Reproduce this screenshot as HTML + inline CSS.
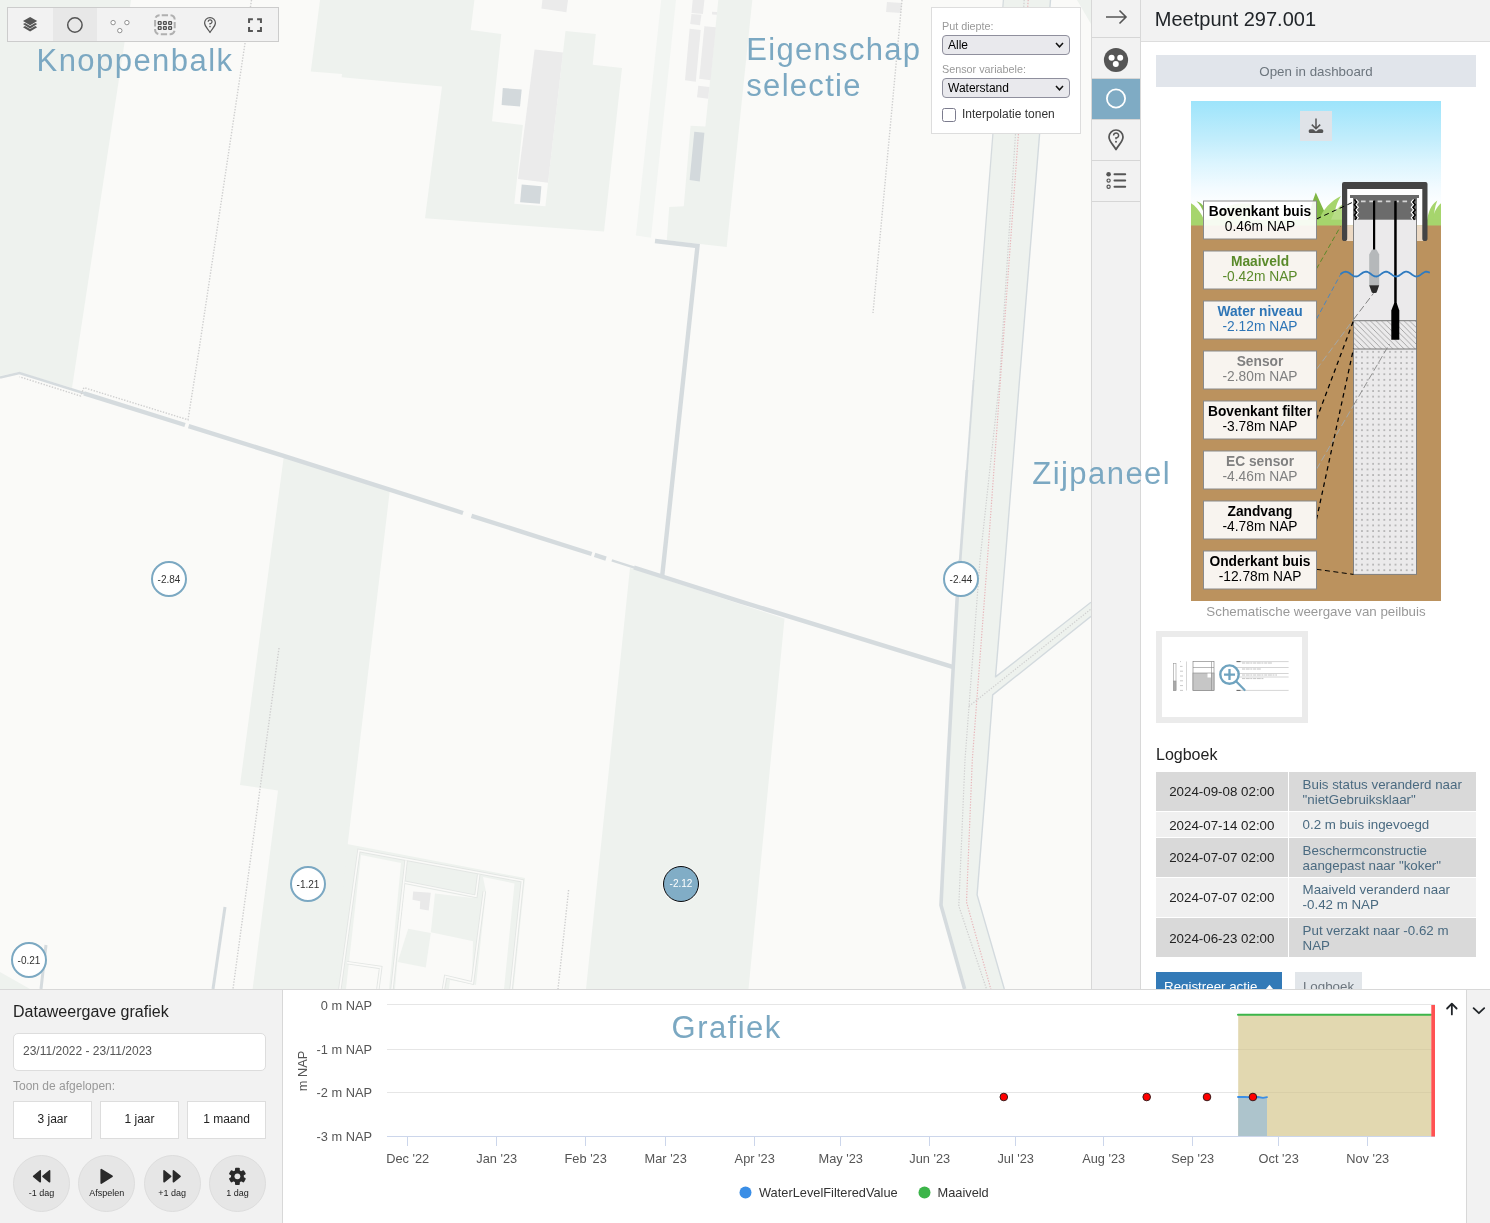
<!DOCTYPE html>
<html lang="nl">
<head>
<meta charset="utf-8">
<title>Meetpunt 297.001</title>
<style>
*{box-sizing:border-box;margin:0;padding:0}
html,body{width:1490px;height:1223px;overflow:hidden;background:#fff;will-change:transform;font-family:"Liberation Sans",sans-serif;color:#222}
.abs{position:absolute}
#map{position:absolute;left:0;top:0;width:1091px;height:989px;overflow:hidden;background:#fafaf8}
#mapsvg{position:absolute;left:0;top:0}
.anno{position:absolute;color:#7ba8c2;font-size:31px;line-height:36px;letter-spacing:1.45px;white-space:nowrap}
.mk{position:absolute;width:36px;height:36px;border-radius:50%;border:2px solid #7ba8c2;background:#fff;font-size:10px;line-height:34px;text-align:center;color:#333}
.mk.selm{background:#81adc6;border:1.8px solid #0a0a0a;color:#fff;line-height:34px;box-shadow:0 0 0 0.8px rgba(255,255,255,0.75)}
/* toolbar */
#toolbar{position:absolute;left:7px;top:7px;width:272px;height:35px;border:1px solid #ccc;background:#f2f2f2;display:flex}
#toolbar .tb{width:45px;height:33px;position:relative}
#toolbar .tb.sel{background:#e8e8e8;width:44px;margin-right:1px}
#toolbar svg{position:absolute;left:0;top:0}
/* selection panel */
#selpanel{position:absolute;left:931px;top:7px;width:150px;height:127px;background:#fff;border:1px solid #ddd}
#selpanel .lbl{position:absolute;left:10px;font-size:10.8px;color:#999;line-height:13px}
#selpanel .sel{position:absolute;left:10px;width:128px;height:20px;border:1px solid #8f8f9d;border-radius:4px;background:#e9e9ed;font-size:12px;line-height:18px;padding-left:5px;color:#000}
#selpanel .cb{position:absolute;left:10px;top:100.2px;width:13.5px;height:13.5px;border:1.8px solid #7c7c8e;border-radius:2.5px;background:#fff}
/* icon column */
#iconcol{position:absolute;left:1091px;top:0;width:50px;height:989px;background:#f2f2f2;border-left:1px solid #d8d8d8;border-right:1px solid #d8d8d8}
#iconcol .ib{position:absolute;left:0;width:48px;height:41px;border-bottom:1px solid #d6d6d6}
#iconcol .ib.sel{background:#7fabc4}
/* side panel */
#side{position:absolute;left:1141px;top:0;width:349px;height:989px;background:#fff;overflow:hidden}
#side .hdr{position:absolute;left:0;top:0;width:349px;height:42px;background:#f2f2f2;border-bottom:1px solid #ddd}
#side .hdr span{position:absolute;left:13.8px;top:7.6px;font-size:20px;line-height:22px;color:#212529}
#dashbtn{position:absolute;left:15px;top:55px;width:320px;height:32px;background:#e1e5eb;color:#6c757d;font-size:13.33px;line-height:33.6px;text-align:center}
.lr{position:absolute;left:15px;width:320px}
.lr .c1{background:var(--bg);overflow:hidden;position:absolute;left:0;top:0;width:131.6px;height:100%;text-align:center;font-size:13.33px;color:#222}
.lr .c2{background:var(--bg);position:absolute;left:133.4px;top:0;width:186.6px;height:100%;font-size:13.33px;line-height:14.9px;color:#4a6a80;display:flex;align-items:center;padding-left:13.2px;padding-top:var(--pt)}
.pb{position:absolute;top:111px;width:79px;height:37.5px;background:#fff;border:1px solid #ddd;font-size:12px;line-height:35px;text-align:center;color:#222}
.rb{position:absolute;top:165px;width:57px;height:57px;border-radius:50%;background:#e6e6e6;border:1px solid #ddd}
.rb svg{position:absolute;left:-1px;top:-1px}
.rb span{position:absolute;left:-1px;top:32px;width:57px;text-align:center;font-size:9px;line-height:11px;color:#222}
.yl{position:absolute;left:292px;width:80px;text-align:right;font-size:12.8px;line-height:14px;color:#555}
.xl{position:absolute;top:162.2px;width:80px;margin-left:-40px;text-align:center;font-size:12.8px;line-height:14px;color:#555}
/* bottom */
#bottom{position:absolute;left:0;top:989px;width:1490px;height:234px;background:#fff;border-top:1px solid #d8d8d8}
#bleft{position:absolute;left:0;top:0;width:283px;height:233px;background:#f2f2f2;border-right:1px solid #d8d8d8}
#bright{position:absolute;left:1466px;top:0;width:24px;height:233px;background:#f2f2f2;border-left:1px solid #d8d8d8}
</style>
</head>
<body>
<div id="map">
<svg id="mapsvg" width="1091" height="989" viewBox="0 0 1091 989">
<g fill="#eef2ee" stroke="none">
<polygon points="0,0 131,0 72,388 19,372 0,376"/>
<polygon points="320,0 474.4,0 470.7,30 501.3,34 492,121.3 522.9,125 514.3,203.8 545.4,206.2 548,182.8 563,52.5 565.5,30.9 595.8,34 592.7,64.8 622,67.9 604,231.6 425,218.3 442,86.4 341.7,77.2 342,74 310.8,71.6"/>
<polygon points="718.3,0 752.3,0 726.7,247 666.8,240.2 669.2,206.9 683.8,206.2 690.6,125.7 705.4,126.6"/>
<polygon points="284,455 390,489 347.5,846 341,989 252.6,989 278,790.5 240,785"/>
<polygon points="630,567.7 784.5,618.8 748.5,989 586,989"/>
<polygon points="0,972 30,989 0,989"/>
<polygon points="1077,0 1091,0 1091,24"/>
</g>
<polygon fill="#f2f5f2" points="661.2,0 676,0 651,237.7 635.9,235.6"/>
<!-- buildings -->
<g fill="#ebebeb">
<polygon points="534.6,49.4 563,52.5 548,182.8 518,179"/>
<polygon points="542.4,0 568,0 566.4,12.3 541.4,8.6"/>
<polygon points="692.7,0 704.4,0 702.9,13.9 691.5,13"/>
<polygon points="691.5,13.9 701.4,14.8 700,25.3 690.2,24"/>
<polygon points="689.6,28.7 700.7,30 695.8,81.8 685,80.3"/>
<polygon points="704.4,26.2 715.9,27.2 710.6,80.3 699.2,78.7"/>
<polygon points="698.3,85.8 709.4,87 708.2,98.8 697,97.3"/>
<polygon points="712,11.7 717,12 717,14.8 712,14.5"/>
<polygon points="887,2 902,3 901,13 886,12"/>
</g>
<g fill="#d3d9dc">
<polygon points="502.8,88 521.7,89.5 520,106.5 501.6,105"/>
<polygon points="521.7,184.6 541.4,186.2 539.9,203.8 520.1,202.2"/>
<polygon points="694.3,131.8 704.4,132.8 699.8,181.5 689.6,180"/>
</g>
<!-- ditches -->
<g fill="none" stroke="#d5dbde" stroke-width="4.4" stroke-linejoin="miter">
<polyline stroke-width="2.6" points="0,377.5 19.5,373 85,393.6"/>
<polyline points="84,393.3 185,425"/>
<polyline points="188.6,426.1 283.6,455.9 463,513"/>
<polyline points="471.5,515.8 540,537.6 591.7,554"/>
<polyline points="594.6,554.9 606,558.6"/>
<polyline stroke-width="2.4" points="611.8,560.4 636,568.1"/>
<polyline points="634,567.5 740,601.3 952.5,666.8"/>
<polyline points="655,241 697.5,246 662.3,575"/>
<line x1="225" y1="907" x2="213" y2="989" stroke-width="3"/>
<line x1="46" y1="945" x2="41" y2="989" stroke-width="3"/>
</g>
<!-- dotted lines -->
<g fill="none" stroke="#cfcfcf" stroke-width="1.4" stroke-dasharray="1.4,1.5">
<polyline points="251.5,0 199,350 188,419.8 83.9,387.6 80.5,396 19.5,376.8"/>
<line x1="902" y1="0" x2="873" y2="313"/>
<line x1="279" y1="648" x2="233" y2="989"/>
<line x1="568.6" y1="890" x2="558" y2="989"/>
</g>
<!-- road strip on the right -->
<polygon fill="#eef2ee" points="1003.4,0 992.9,134 973.6,380 966.9,470 960.2,560 957.3,596 953.3,666 948.1,760 941,905.2 964.6,989 1004.3,989 977.1,894.9 987.8,760 992.7,694.9 1091,616.4 1091,602.2 995.5,676.9 1005.2,560 1019.5,380 1039.6,134 1050.5,0"/>
<g fill="none" stroke="#d5dbde" stroke-linejoin="round">
<polyline stroke-width="1.3" points="1003.4,0 992.9,134 973.6,380"/>
<polyline stroke-width="1.9" points="973.6,380 966.9,470"/>
<polyline stroke-width="2.7" points="966.9,470 960.2,560"/>
<polyline stroke-width="3.6" points="960.2,560 957.3,596 953.3,666 948.1,760 941,905.2 964.6,989"/>
<polyline stroke="#d3dade" stroke-width="1.4" points="1050.5,0 1039.6,134 1019.5,380 1005.2,560 995.5,676.9 1091,602.2"/>
<polyline stroke="#d3dade" stroke-width="1.4" points="1091,616.4 992.7,694.9 987.8,760 977.1,894.9 1004.3,989"/>
<polyline stroke="#cfcfcf" stroke-width="1.2" stroke-dasharray="1.3,1.5" points="1024.2,0 1015.5,134 999.6,380 980,560 965,760 958.8,906 986.5,989"/>
<polyline stroke="#e8b6ba" stroke-width="1.2" stroke-dasharray="1.3,1.5" points="1028.2,0 1018.4,134 1000.4,380 987.4,560 972.3,760 966.5,902 990.8,989"/>
<polyline stroke="#cfcfcf" stroke-width="1.2" stroke-dasharray="1.3,1.5" points="969,706.3 1091,609"/>
</g>
<!-- bottom building complex -->
<polygon fill="#eef2ee" points="347,844 525,878 513.5,989 336,989"/>
<g fill="#fafaf8" stroke="none">
<polygon points="361,855 401,863 389,989 346,989"/>
<polygon points="404,884 474,898 472,982 445,976 443.5,989 395,989"/>
<polygon points="483,877 514.5,883.5 504,989 449,989 450,980 476,985 486,892"/>
</g>
<g fill="#eef2ee" stroke="none">
<polygon points="435,893.5 477.5,898.5 474.5,941.4 430.8,932.3"/>
<polygon points="408.2,928.7 430.8,933 425.8,967.5 397.7,961.9"/>
</g>
<g fill="none" stroke="#e3e6e4" stroke-width="3.4" stroke-linejoin="miter">
<polyline points="339.9,989 358.9,850.5 522.4,880.8 511.1,989"/>
<polyline points="406.1,860.4 392,989"/>
<polyline points="404.7,882.2 475.9,896.3 478.7,874.5"/>
<polyline points="484.3,891.4 472.4,983 445.6,976.6 443.5,989"/>
<polyline points="346.9,962.6 380.7,967.5 377.9,989"/>
</g>
<g fill="none" stroke="#fafaf8" stroke-width="1.6" stroke-linejoin="miter">
<polyline points="339.9,989 358.9,850.5 522.4,880.8 511.1,989"/>
<polyline points="406.1,860.4 392,989"/>
<polyline points="404.7,882.2 475.9,896.3 478.7,874.5"/>
<polyline points="484.3,891.4 472.4,983 445.6,976.6 443.5,989"/>
<polyline points="346.9,962.6 380.7,967.5 377.9,989"/>
</g>
<polygon fill="#e9e9e9" points="413.2,891.4 430.8,892.8 428.7,910.4 419.8,909 420.2,901.2 412.5,899.8"/>
</svg>
<div id="toolbar">
<div class="tb"><svg width="45" height="33" viewBox="0 0 45 33"><g fill="#555"><path d="M22.1 9 L29.2 13.1 L22.1 17.2 L15 13.1 Z"/><path d="M15 16.1 L17 14.95 L22.1 17.95 L27.2 14.95 L29.2 16.1 L22.1 20.4 Z"/><path d="M15 19.2 L17 18.05 L22.1 21.05 L27.2 18.05 L29.2 19.2 L22.1 23.5 Z"/></g></svg></div>
<div class="tb sel"><svg width="45" height="33" viewBox="0 0 45 33"><circle cx="21.9" cy="17" r="7.2" fill="none" stroke="#555" stroke-width="1.5"/></svg></div>
<div class="tb"><svg width="45" height="33" viewBox="0 0 45 33"><g fill="#fff" stroke="#777" stroke-width="0.8"><circle cx="15.1" cy="14.6" r="2.2"/><circle cx="28.9" cy="14.6" r="2.2"/><circle cx="21.8" cy="22.6" r="2.2"/></g></svg></div>
<div class="tb"><svg width="45" height="33" viewBox="0 0 45 33"><rect x="12.1" y="7.2" width="19.6" height="19" rx="4.5" fill="none" stroke="#b0b0b0" stroke-width="2" stroke-dasharray="6.3,2.54" stroke-dashoffset="-2.12"/><g fill="none" stroke="#505050" stroke-width="1.3"><rect x="15.3" y="13.6" width="2.8" height="2.8" rx="0.6"/><rect x="20.5" y="13.6" width="2.8" height="2.8" rx="0.6"/><rect x="25.7" y="13.6" width="2.8" height="2.8" rx="0.6"/><rect x="15.3" y="18.6" width="2.8" height="2.8" rx="0.6"/><rect x="20.5" y="18.6" width="2.8" height="2.8" rx="0.6"/><rect x="25.7" y="18.6" width="2.8" height="2.8" rx="0.6"/></g></svg></div>
<div class="tb"><svg width="45" height="33" viewBox="0 0 45 33"><path d="M22 24.5 C20 21 16.6 18.5 16.6 15 A5.4 5.4 0 0 1 27.4 15 C27.4 18.5 24 21 22 24.5 Z" fill="none" stroke="#555" stroke-width="1.2" stroke-linejoin="round"/><path d="M20.2 13.7 A1.9 1.9 0 1 1 22 15.6 L22 16.6" fill="none" stroke="#555" stroke-width="1.2"/><circle cx="22" cy="18.6" r="0.8" fill="#555"/></svg></div>
<div class="tb"><svg width="45" height="33" viewBox="0 0 45 33"><g fill="none" stroke="#555" stroke-width="2"><path d="M16.05 15 V11.15 H19.9"/><path d="M24.1 11.15 H27.95 V15"/><path d="M27.95 19.1 V22.95 H24.1"/><path d="M19.9 22.95 H16.05 V19.1"/></g></svg></div>
</div>
<div class="anno" style="left:36.5px;top:43px">Knoppenbalk</div>
<div class="anno" style="left:746.3px;top:32px;letter-spacing:1.3px">Eigenschap<br>selectie</div>
<div id="selpanel">
<div class="lbl" style="top:12px">Put diepte:</div>
<div class="sel" style="top:27px">Alle<svg class="abs" style="right:5px;top:5px" width="9" height="8" viewBox="0 0 9 8"><path d="M1 2 L4.5 5.8 L8 2" fill="none" stroke="#111" stroke-width="1.5"/></svg></div>
<div class="lbl" style="top:55px">Sensor variabele:</div>
<div class="sel" style="top:70px">Waterstand<svg class="abs" style="right:5px;top:5px" width="9" height="8" viewBox="0 0 9 8"><path d="M1 2 L4.5 5.8 L8 2" fill="none" stroke="#111" stroke-width="1.5"/></svg></div>
<div class="cb"></div>
<div class="abs" style="left:30px;top:99px;font-size:12px;line-height:14px;color:#333">Interpolatie tonen</div>
</div>
<div class="mk" style="left:151px;top:561px">-2.84</div>
<div class="mk" style="left:943px;top:561px">-2.44</div>
<div class="mk" style="left:290px;top:866px">-1.21</div>
<div class="mk selm" style="left:663px;top:866px">-2.12</div>
<div class="mk" style="left:11px;top:942px">-0.21</div>
</div>
<div id="iconcol">
<div class="ib" style="top:-3px"><svg class="abs" style="left:0;top:3px" width="48" height="38" viewBox="0 0 48 38"><path d="M14 17 H34 M27.5 10.5 L34 17 L27.5 23.5" fill="none" stroke="#555" stroke-width="1.6"/></svg></div>
<div class="ib" style="top:38px"><svg class="abs" style="left:0;top:0" width="48" height="40" viewBox="0 0 48 40"><circle cx="24" cy="22" r="12.1" fill="#555"/><circle cx="19.6" cy="19.8" r="3" fill="#fff"/><circle cx="28.2" cy="19.8" r="3" fill="#fff"/><circle cx="23.8" cy="26.1" r="3" fill="#fff"/></svg></div>
<div class="ib sel" style="top:79px"><svg class="abs" style="left:0;top:0" width="48" height="40" viewBox="0 0 48 40"><circle cx="24" cy="19.5" r="9.1" fill="none" stroke="#fff" stroke-width="1.8"/></svg></div>
<div class="ib" style="top:120px"><svg class="abs" style="left:0;top:0" width="48" height="40" viewBox="0 0 48 40"><path d="M24 29.5 C21.5 25 17 21.5 17 17 A7 7 0 0 1 31 17 C31 21.5 26.5 25 24 29.5 Z" fill="none" stroke="#555" stroke-width="1.7" stroke-linejoin="round"/><path d="M21.6 15.4 A2.5 2.5 0 1 1 24 17.9 L24 19.2" fill="none" stroke="#555" stroke-width="1.5"/><circle cx="24" cy="21.8" r="1" fill="#555"/></svg></div>
<div class="ib" style="top:161px"><svg class="abs" style="left:0;top:0" width="48" height="40" viewBox="0 0 48 40"><g stroke="#555" stroke-width="2" fill="none" stroke-linecap="round"><path d="M22.5 13.2 H33.2 M22.5 19.6 H33.2 M22.5 25.7 H33.2"/></g><circle cx="16.6" cy="13.2" r="2.3" fill="#555"/><circle cx="16.6" cy="19.6" r="1.6" fill="none" stroke="#555" stroke-width="1.2"/><circle cx="16.6" cy="25.7" r="1.6" fill="none" stroke="#555" stroke-width="1.2"/></svg></div>
</div>
<div id="side">
<div class="hdr"><span>Meetpunt 297.001</span></div>
<div id="dashbtn">Open in dashboard</div>
<!--ILLSTART-->
<svg class="abs" style="left:50px;top:101px" width="250" height="500" viewBox="0 0 250 500" font-family="Liberation Sans, sans-serif">
<defs>
<linearGradient id="sky" x1="0" y1="0" x2="0" y2="1"><stop offset="0" stop-color="#9de4fb"/><stop offset="0.3" stop-color="#c1edfc"/><stop offset="0.5" stop-color="#dcf5fe"/><stop offset="0.7" stop-color="#f3fbff"/><stop offset="0.85" stop-color="#ffffff"/><stop offset="1" stop-color="#ffffff"/></linearGradient>
<pattern id="hatch" x="162.5" y="219.7" width="5.6" height="5.6" patternUnits="userSpaceOnUse"><path d="M-1,-1 L6.6,6.6 M-1,4.6 L1,6.6 M4.6,-1 L6.6,1" stroke="#8a8a8a" stroke-width="0.7" fill="none"/></pattern>
<pattern id="dots" x="162.5" y="248" width="5.6" height="5.6" patternUnits="userSpaceOnUse"><rect x="2.25" y="2.25" width="1.15" height="1.15" fill="#666"/></pattern>
</defs>
<rect x="0" y="0" width="250" height="125" fill="url(#sky)"/>
<!-- grass -->
<g>
<path d="M0,125 L0,102.2 C4,104.5 8,109 11,114.5 L13,119 L250,119 L250,125 Z" fill="#a6d56d"/><path d="M5.5,100.3 C9,101.5 11.5,103.5 13,106 L13,112 C11,107.5 9,103.5 5.5,100.3 Z" fill="#8cc152"/>
<path d="M117,119 C119.5,108 121.5,100 124.8,91.5 C128.5,100 133,110 137.5,119 Z" fill="#7fb644"/>
<path d="M128,119 C132,108 140,100 150,95 C146,101 143,110 143,119 Z" fill="#a6d56d"/>
<path d="M140,119 C142,112 147,106 152,103 L152,119 Z" fill="#b7dd86"/>
<path d="M236,121 C237,111 240,104 246.3,99.6 C243.5,106 242.8,113 243.5,121 Z" fill="#a6d56d"/>
<path d="M241,121 C242.5,112 245.5,106 250,102.3 L250,121 Z" fill="#a6d56d"/><path d="M225.5,100 L231.3,99 L231.3,123.5 L225.5,123.5 Z" fill="#d6ecc3"/>
<path d="M20,119 C26,110 36,104 48,102.5 L60,102.5 L60,119 Z" fill="#b7dd86"/>
<rect x="0" y="118.7" width="250" height="6.3" fill="#a6d56d"/>
</g>
<rect x="0" y="124.5" width="250" height="375.5" fill="#bb925e"/>
<!-- cap interior -->
<rect x="155" y="86" width="78" height="38.5" fill="#ffffff"/>
<rect x="155" y="124.5" width="78" height="15.5" fill="#ecd9c3"/>
<!-- cap -->
<path d="M151,137.5 V83 Q151,81 153,81 H234.5 Q236.5,81 236.5,83 V137.5 A2.6,2.6 0 0 1 231.3,137.5 V88 H156.2 V137.5 A2.6,2.6 0 0 1 151,137.5 Z" fill="#444444"/>
<!-- tube -->
<rect x="162.5" y="97" width="63" height="376.4" fill="#ebeaeb" stroke="#808080" stroke-width="1"/>
<rect x="159" y="94" width="69" height="3" fill="#6b6b6b"/>
<rect x="162.5" y="97" width="63" height="21.7" fill="#6b6b6b"/>
<line x1="170" y1="100.4" x2="218.5" y2="100.4" stroke="#d4d4d4" stroke-width="1.7" stroke-dasharray="4.6,3.7"/>
<!-- threads -->
<path d="M165,98.5 l2.2,2.6 l-2.2,2.6 l2.2,2.6 l-2.2,2.6 l2.2,2.6 l-2.2,2.6 l2.2,2.6 l-1.6,2" fill="none" stroke="#fff" stroke-width="1.3"/>
<path d="M163.4,98.5 l2.2,2.6 l-2.2,2.6 l2.2,2.6 l-2.2,2.6 l2.2,2.6 l-2.2,2.6 l2.2,2.6 l-1.6,2" fill="none" stroke="#000" stroke-width="1.4"/>
<path d="M222.6,98.5 l-2.2,2.6 l2.2,2.6 l-2.2,2.6 l2.2,2.6 l-2.2,2.6 l2.2,2.6 l-2.2,2.6 l1.6,2" fill="none" stroke="#fff" stroke-width="1.3"/>
<path d="M224.2,98.5 l-2.2,2.6 l2.2,2.6 l-2.2,2.6 l2.2,2.6 l-2.2,2.6 l2.2,2.6 l-2.2,2.6 l1.6,2" fill="none" stroke="#000" stroke-width="1.4"/>
<!-- hatched + dotted sections -->
<rect x="162.5" y="219.7" width="63" height="28.3" fill="url(#hatch)" stroke="#777" stroke-width="1"/>
<rect x="163" y="248.5" width="62" height="224.4" fill="url(#dots)"/>
<!-- connector lines -->
<g fill="none" stroke-linecap="butt">
<line x1="125.5" y1="118" x2="163.4" y2="100.5" stroke="#000" stroke-width="1" stroke-dasharray="5,3.5"/>
<line x1="125.5" y1="167.8" x2="149.5" y2="125.5" stroke="#5a8a2a" stroke-width="1" stroke-dasharray="5,3"/>
<line x1="125.5" y1="218" x2="149.5" y2="173.5" stroke="#4a86c0" stroke-width="1" stroke-dasharray="5,3"/>
<line x1="125.5" y1="268.3" x2="162.5" y2="218.5" stroke="#a3a9ad" stroke-width="0.9" stroke-dasharray="7,3"/>
<line x1="162.5" y1="218.5" x2="182.5" y2="192.3" stroke="#777" stroke-width="0.9" stroke-dasharray="7,3"/>
<line x1="125.5" y1="368.3" x2="162.5" y2="304.3" stroke="#a3a9ad" stroke-width="0.9" stroke-dasharray="7,3"/>
<line x1="162.5" y1="304.3" x2="198.5" y2="243" stroke="#888" stroke-width="0.9" stroke-dasharray="7,3"/>
<line x1="125.5" y1="318.3" x2="162.5" y2="219.7" stroke="#000" stroke-width="1.25" stroke-dasharray="4.5,3.8"/>
<line x1="125.5" y1="418.3" x2="162.5" y2="247.7" stroke="#000" stroke-width="1.25" stroke-dasharray="4.5,3.8"/>
<line x1="125.5" y1="468.3" x2="162.5" y2="473.4" stroke="#000" stroke-width="1" stroke-dasharray="5,3.5"/>
</g>
<!-- cables & sensors -->
<rect x="182" y="99.6" width="2.2" height="49.4" fill="#000"/>
<path d="M181,148.4 L185.4,148.4 L188.2,153.5 L188.2,184.3 L178.2,184.3 L178.2,153.5 Z" fill="#b5b8ba"/>
<path d="M178.2,184.3 L188.2,184.3 L185.6,191.6 Q183.2,192.6 180.8,191.6 Z" fill="#2b2b2b"/>
<rect x="203.2" y="99.6" width="2.5" height="103.4" fill="#000"/>
<path d="M203.2,202 L205.7,202 L208.3,209.5 L208.3,238.7 L200.3,238.7 L200.3,209.5 Z" fill="#000"/>
<!-- water wave -->
<path d="M149.9,172.91 L150.7,172.33 L151.5,171.79 L152.3,171.34 L153.1,170.99 L153.9,170.77 L154.7,170.70 L155.5,170.78 L156.3,171.00 L157.1,171.35 L157.9,171.81 L158.7,172.34 L159.5,172.93 L160.3,173.53 L161.1,174.10 L161.9,174.60 L162.7,175.02 L163.5,175.32 L164.3,175.47 L165.1,175.49 L165.9,175.35 L166.7,175.08 L167.5,174.68 L168.3,174.19 L169.1,173.62 L169.9,173.03 L170.7,172.44 L171.5,171.89 L172.4,171.42 L173.2,171.05 L174.0,170.80 L174.8,170.70 L175.6,170.75 L176.4,170.94 L177.2,171.27 L178.0,171.71 L178.8,172.24 L179.6,172.81 L180.4,173.41 L181.2,173.99 L182.0,174.51 L182.8,174.95 L183.6,175.27 L184.4,175.46 L185.2,175.50 L186.0,175.39 L186.8,175.14 L187.6,174.76 L188.4,174.29 L189.2,173.74 L190.0,173.14 L190.8,172.55 L191.6,171.99 L192.4,171.50 L193.2,171.11 L194.0,170.84 L194.8,170.71 L195.6,170.73 L196.4,170.90 L197.2,171.20 L198.0,171.62 L198.8,172.13 L199.6,172.70 L200.4,173.30 L201.2,173.88 L202.0,174.42 L202.8,174.87 L203.6,175.22 L204.4,175.43 L205.2,175.50 L206.0,175.42 L206.8,175.20 L207.6,174.85 L208.4,174.39 L209.2,173.85 L210.0,173.26 L210.8,172.66 L211.6,172.09 L212.4,171.59 L213.2,171.17 L214.0,170.88 L214.8,170.72 L215.6,170.71 L216.5,170.85 L217.3,171.13 L218.1,171.53 L218.9,172.02 L219.7,172.59 L220.5,173.18 L221.3,173.77 L222.1,174.32 L222.9,174.79 L223.7,175.16 L224.5,175.40 L225.3,175.50 L226.1,175.45 L226.9,175.25 L227.7,174.92 L228.5,174.48 L229.3,173.95 L230.1,173.37 L230.9,172.78 L231.7,172.20 L232.5,171.68 L233.3,171.25 L234.1,170.93 L234.9,170.74 L235.7,170.70 L236.5,170.81 L237.3,171.07 L238.1,171.44" fill="none" stroke="#2f7bc0" stroke-width="1.8" stroke-linecap="round"/>
<!-- labels -->
<g id="lbls">
<rect x="12.5" y="100.0" width="113" height="38" fill="#ffffff" fill-opacity="0.9" stroke="#8a8a8a" stroke-width="1"/>
<text transform="translate(69,0) scale(0.985,1)" x="0" y="115.1" text-anchor="middle" font-size="14" font-weight="bold" fill="#000">Bovenkant buis</text>
<text transform="translate(69,0) scale(0.985,1)" x="0" y="130.1" text-anchor="middle" font-size="14" fill="#000">0.46m NAP</text>
<rect x="12.5" y="150.0" width="113" height="38" fill="#ffffff" fill-opacity="0.9" stroke="#8a8a8a" stroke-width="1"/>
<text transform="translate(69,0) scale(0.985,1)" x="0" y="165.1" text-anchor="middle" font-size="14" font-weight="bold" fill="#5a8a2a">Maaiveld</text>
<text transform="translate(69,0) scale(0.985,1)" x="0" y="180.1" text-anchor="middle" font-size="14" fill="#5a8a2a">-0.42m NAP</text>
<rect x="12.5" y="200.0" width="113" height="38" fill="#ffffff" fill-opacity="0.9" stroke="#8a8a8a" stroke-width="1"/>
<text transform="translate(69,0) scale(0.985,1)" x="0" y="215.1" text-anchor="middle" font-size="14" font-weight="bold" fill="#2e75b6">Water niveau</text>
<text transform="translate(69,0) scale(0.985,1)" x="0" y="230.1" text-anchor="middle" font-size="14" fill="#2e75b6">-2.12m NAP</text>
<rect x="12.5" y="250.0" width="113" height="38" fill="#ffffff" fill-opacity="0.9" stroke="#8a8a8a" stroke-width="1"/>
<text transform="translate(69,0) scale(0.985,1)" x="0" y="265.1" text-anchor="middle" font-size="14" font-weight="bold" fill="#808080">Sensor</text>
<text transform="translate(69,0) scale(0.985,1)" x="0" y="280.1" text-anchor="middle" font-size="14" fill="#808080">-2.80m NAP</text>
<rect x="12.5" y="300.0" width="113" height="38" fill="#ffffff" fill-opacity="0.9" stroke="#8a8a8a" stroke-width="1"/>
<text transform="translate(69,0) scale(0.985,1)" x="0" y="315.1" text-anchor="middle" font-size="14" font-weight="bold" fill="#000">Bovenkant filter</text>
<text transform="translate(69,0) scale(0.985,1)" x="0" y="330.1" text-anchor="middle" font-size="14" fill="#000">-3.78m NAP</text>
<rect x="12.5" y="350.0" width="113" height="38" fill="#ffffff" fill-opacity="0.9" stroke="#8a8a8a" stroke-width="1"/>
<text transform="translate(69,0) scale(0.985,1)" x="0" y="365.1" text-anchor="middle" font-size="14" font-weight="bold" fill="#808080">EC sensor</text>
<text transform="translate(69,0) scale(0.985,1)" x="0" y="380.1" text-anchor="middle" font-size="14" fill="#808080">-4.46m NAP</text>
<rect x="12.5" y="400.0" width="113" height="38" fill="#ffffff" fill-opacity="0.9" stroke="#8a8a8a" stroke-width="1"/>
<text transform="translate(69,0) scale(0.985,1)" x="0" y="415.1" text-anchor="middle" font-size="14" font-weight="bold" fill="#000">Zandvang</text>
<text transform="translate(69,0) scale(0.985,1)" x="0" y="430.1" text-anchor="middle" font-size="14" fill="#000">-4.78m NAP</text>
<rect x="12.5" y="450.0" width="113" height="38" fill="#ffffff" fill-opacity="0.9" stroke="#8a8a8a" stroke-width="1"/>
<text transform="translate(69,0) scale(0.985,1)" x="0" y="465.1" text-anchor="middle" font-size="14" font-weight="bold" fill="#000">Onderkant buis</text>
<text transform="translate(69,0) scale(0.985,1)" x="0" y="480.1" text-anchor="middle" font-size="14" fill="#000">-12.78m NAP</text>

</g>
</svg>
<div class="abs" style="left:0;top:604px;width:349px;text-align:center;font-size:13.33px;line-height:16px;color:#999;padding-left:1px">Schematische weergave van peilbuis</div>
<div class="abs" style="left:159px;top:111px;width:32px;height:30px;background:#dfe3e8"><svg class="abs" style="left:0;top:0" width="32" height="30" viewBox="0 0 32 30"><path d="M16 7.5 V17.5 M11.8 13.6 L16 17.8 L20.2 13.6" fill="none" stroke="#555" stroke-width="1.5"/><path d="M10.3 18.2 H13.2 L16 20.6 L18.8 18.2 H21.7 Q23.3 18.2 23.3 19.8 V20.4 Q23.3 22 21.7 22 H10.3 Q8.7 22 8.7 20.4 V19.8 Q8.7 18.2 10.3 18.2 Z" fill="#555"/></svg></div>
<!--ILLEND-->
<div class="abs" style="left:15px;top:631px;width:152px;height:92px;background:#ebebeb"></div>
<div class="abs" style="left:21px;top:637px;width:140px;height:80px;background:#fff"></div>
<svg class="abs" style="left:15px;top:631px" width="152" height="92" viewBox="0 0 152 92">
<g fill="none" stroke="#999" stroke-width="0.6">
<rect x="17.5" y="32.3" width="2.5" height="27.3" fill="#fff"/><rect x="17.5" y="50" width="2.5" height="9.6" fill="#aaa"/>
<path d="M30.5 30.5 V59.5" stroke="#bbb"/>
<path d="M24 30.6 h1 M24 35.4 h2.5 M24 40.2 h3 M24 45 h3 M24 49.8 h3 M24 54.6 h3 M24 59.4 h3" stroke="#bbb" stroke-width="0.8"/>
<rect x="37" y="30.5" width="21" height="29" fill="#fff" stroke="#777"/>
<rect x="37" y="42" width="21" height="17.5" fill="#c6c6c6" stroke="#888"/>
<rect x="51.5" y="42.5" width="3.5" height="4" fill="#fff" stroke="none"/>
<path d="M37 36.5 H58 M55.5 30.5 V59.5" stroke="#888"/>
<path d="M80.7 30.6 H132.6 M80.7 36.5 H132.6 M80.7 42.5 H132.6 M80.7 46 H132.6 M80.7 59.4 H132.6" stroke="#aaa" stroke-width="0.5"/>
<path d="M86 32 H116 M86 38 H105 M86 44 H121 M86 47.6 H108" stroke="#b5b5b5" stroke-width="0.8" stroke-dasharray="3,0.7,4,0.6,2,0.8"/>
<path d="M80.5 30.6 h4 M80.5 59.4 h4" stroke="#555" stroke-width="0.9"/>
</g>
<circle cx="73.5" cy="43.6" r="9.2" fill="rgba(255,255,255,0.6)" stroke="#6fa3bf" stroke-width="2.4"/>
<path d="M68 43.6 H79 M73.5 38.1 V49.1" stroke="#6fa3bf" stroke-width="2.3" fill="none"/>
<path d="M80.3 50.6 L88.6 59" stroke="#6fa3bf" stroke-width="2.2" stroke-linecap="round" fill="none"/>
</svg>
<div class="abs" style="left:15px;top:745px;font-size:16px;line-height:20px;color:#222">Logboek</div>
<div class="lr" style="top:772px;height:38.6px;--bg:#d9d9d9;--pt:3.6px"><div class="c1" style="line-height:40.800000000000004px">2024-09-08 02:00</div><div class="c2"><span>Buis status veranderd naar<br>"nietGebruiksklaar"</span></div></div>
<div class="lr" style="top:812px;height:24.8px;--bg:#f0f0f0;--pt:1.2px"><div class="c1" style="line-height:27.0px">2024-07-14 02:00</div><div class="c2"><span>0.2 m buis ingevoegd</span></div></div>
<div class="lr" style="top:838.3px;height:38.4px;--bg:#d9d9d9;--pt:3.6px"><div class="c1" style="line-height:40.6px">2024-07-07 02:00</div><div class="c2"><span>Beschermconstructie<br>aangepast naar "koker"</span></div></div>
<div class="lr" style="top:878px;height:38.6px;--bg:#f0f0f0;--pt:1.8px"><div class="c1" style="line-height:40.800000000000004px">2024-07-07 02:00</div><div class="c2"><span>Maaiveld veranderd naar<br>-0.42 m NAP</span></div></div>
<div class="lr" style="top:918px;height:39.4px;--bg:#d9d9d9;--pt:2.4px"><div class="c1" style="line-height:41.6px">2024-06-23 02:00</div><div class="c2"><span>Put verzakt naar -0.62 m<br>NAP</span></div></div>

<div class="abs" style="left:15px;top:972px;width:126px;height:30px;background:#337ab7;color:#fff;font-size:13.33px;line-height:29px;padding-left:8px">Registreer actie<svg class="abs" style="left:109px;top:12px" width="9" height="6" viewBox="0 0 9 6"><path d="M0.5 5.5 L4.5 0.8 L8.5 5.5 Z" fill="#fff"/></svg></div>
<div class="abs" style="left:154px;top:972px;width:67px;height:30px;background:#e2e6ea;color:#6c757d;font-size:13.33px;line-height:29px;text-align:center">Logboek</div>

</div>
<div class="anno" style="left:1032.3px;top:456px;z-index:5">Zijpaneel</div>
<div id="bottom">
<div id="bleft">

<div class="abs" style="left:13px;top:12px;font-size:16px;line-height:20px;color:#222">Dataweergave grafiek</div>
<div class="abs" style="left:13px;top:43px;width:253px;height:38px;background:#fff;border:1px solid #ddd;border-radius:5px;font-size:12px;line-height:35.4px;color:#555;padding-left:9px">23/11/2022 - 23/11/2023</div>
<div class="abs" style="left:13px;top:89px;font-size:12px;line-height:14px;color:#999">Toon de afgelopen:</div>
<div class="pb" style="left:13px">3 jaar</div>
<div class="pb" style="left:100px">1 jaar</div>
<div class="pb" style="left:187px">1 maand</div>
<div class="rb" style="left:13px"><svg width="57" height="57" viewBox="0 0 57 57"><path d="M27.3 15.8 V26.8 L20.6 21.3 Z M36.6 15.8 V26.8 L29.9 21.3 Z" fill="#2a2a2a" stroke="#2a2a2a" stroke-width="1.5" stroke-linejoin="round"/></svg><span>-1 dag</span></div>
<div class="rb" style="left:78.3px"><svg width="57" height="57" viewBox="0 0 57 57"><path d="M23.3 14.7 V28 L34 21.35 Z" fill="#2a2a2a" stroke="#2a2a2a" stroke-width="1.8" stroke-linejoin="round"/></svg><span>Afspelen</span></div>
<div class="rb" style="left:143.7px"><svg width="57" height="57" viewBox="0 0 57 57"><path d="M20 15.8 V26.8 L26.7 21.3 Z M29.4 15.8 V26.8 L36.1 21.3 Z" fill="#2a2a2a" stroke="#2a2a2a" stroke-width="1.5" stroke-linejoin="round"/></svg><span>+1 dag</span></div>
<div class="rb" style="left:209px"><svg width="57" height="57" viewBox="0 0 57 57"><g transform="translate(28.4,21.3)"><g fill="#2a2a2a"><circle r="6.4"/><g id="tooth"><rect x="-2.4" y="-8.6" width="4.8" height="4.4" rx="0.9"/></g><use href="#tooth" transform="rotate(60)"/><use href="#tooth" transform="rotate(120)"/><use href="#tooth" transform="rotate(180)"/><use href="#tooth" transform="rotate(240)"/><use href="#tooth" transform="rotate(300)"/></g><circle r="2.9" fill="#e6e6e6"/></g></svg><span>1 dag</span></div>

</div>
<svg class="abs" style="left:284px;top:0" width="1182" height="233" viewBox="284 0 1182 233">
<g stroke="#e6e6e6" stroke-width="1"><line x1="387" y1="14.5" x2="1435" y2="14.5"/><line x1="387" y1="59.5" x2="1435" y2="59.5"/><line x1="387" y1="102.5" x2="1435" y2="102.5"/></g>
<rect x="1238.2" y="25" width="193.3" height="121" fill="#e2d8b0"/>
<rect x="1238.2" y="107" width="28.8" height="39" fill="#adc4cc"/>
<g stroke="#d9cfa8" stroke-width="1"><line x1="1238" y1="59.5" x2="1431" y2="59.5"/><line x1="1238" y1="102.5" x2="1431" y2="102.5"/></g>
<line x1="1238" y1="24.7" x2="1431" y2="24.7" stroke="#3cb54a" stroke-width="2" stroke-linecap="round"/>
<path d="M1238 107 L1245 107 L1252 107.3 L1258 107 L1263 107.8 L1267 107.2" fill="none" stroke="#3a8ee6" stroke-width="1.8" stroke-linecap="round"/>
<line x1="387" y1="146.5" x2="1435" y2="146.5" stroke="#ccd6eb" stroke-width="1"/>
<g stroke="#ccd6eb" stroke-width="1"><line x1="407.5" y1="146" x2="407.5" y2="156"/><line x1="496.5" y1="146" x2="496.5" y2="156"/><line x1="585.5" y1="146" x2="585.5" y2="156"/><line x1="665.5" y1="146" x2="665.5" y2="156"/><line x1="754.5" y1="146" x2="754.5" y2="156"/><line x1="840.5" y1="146" x2="840.5" y2="156"/><line x1="929.5" y1="146" x2="929.5" y2="156"/><line x1="1015.5" y1="146" x2="1015.5" y2="156"/><line x1="1103.5" y1="146" x2="1103.5" y2="156"/><line x1="1192.5" y1="146" x2="1192.5" y2="156"/><line x1="1278.5" y1="146" x2="1278.5" y2="156"/><line x1="1367.5" y1="146" x2="1367.5" y2="156"/></g>
<rect x="1431.3" y="15" width="3.7" height="131.5" fill="#ff5252"/>
<g fill="#ff0000" stroke="#3a1a1a" stroke-width="1"><circle cx="1003.8" cy="107" r="3.8"/><circle cx="1146.7" cy="107" r="3.8"/><circle cx="1207" cy="107" r="3.8"/><circle cx="1252.9" cy="107" r="3.8"/></g>
<circle cx="745.5" cy="202.5" r="6" fill="#3a8ee6"/><circle cx="924.5" cy="202.5" r="6" fill="#3cb54a"/>
<path d="M1451.85 24.4 V14 M1447.1 18.5 L1451.85 13.7 L1456.6 18.5" fill="none" stroke="#212529" stroke-width="1.8" stroke-linecap="round" stroke-linejoin="round"/>
</svg>
<div class="yl" style="top:9.3px">0 m NAP</div><div class="yl" style="top:52.5px">-1 m NAP</div><div class="yl" style="top:96.3px">-2 m NAP</div><div class="yl" style="top:140.3px">-3 m NAP</div>
<div class="abs" style="left:272.9px;top:73.7px;width:60px;height:14px;text-align:center;font-size:12.8px;line-height:14px;color:#555;transform:rotate(-90deg)">m NAP</div>
<div class="xl" style="left:407.7px">Dec '22</div><div class="xl" style="left:496.7px">Jan '23</div><div class="xl" style="left:585.7px">Feb '23</div><div class="xl" style="left:665.7px">Mar '23</div><div class="xl" style="left:754.7px">Apr '23</div><div class="xl" style="left:840.7px">May '23</div><div class="xl" style="left:929.7px">Jun '23</div><div class="xl" style="left:1015.7px">Jul '23</div><div class="xl" style="left:1103.7px">Aug '23</div><div class="xl" style="left:1192.7px">Sep '23</div><div class="xl" style="left:1278.7px">Oct '23</div><div class="xl" style="left:1367.7px">Nov '23</div>
<div class="abs" style="left:759px;top:195px;font-size:12.8px;line-height:15px;color:#333">WaterLevelFilteredValue</div>
<div class="abs" style="left:937.5px;top:195px;font-size:12.8px;line-height:15px;color:#333">Maaiveld</div>
<div class="anno" style="left:671.6px;top:20px">Grafiek</div>
<div id="bright">
<svg class="abs" style="left:0;top:0" width="23" height="40" viewBox="0 0 23 40"><path d="M6.6 18.2 L11.9 23.2 L17.2 18.2" fill="none" stroke="#212529" stroke-width="1.8" stroke-linecap="round" stroke-linejoin="round"/></svg>
</div>
</div>
</body>
</html>
